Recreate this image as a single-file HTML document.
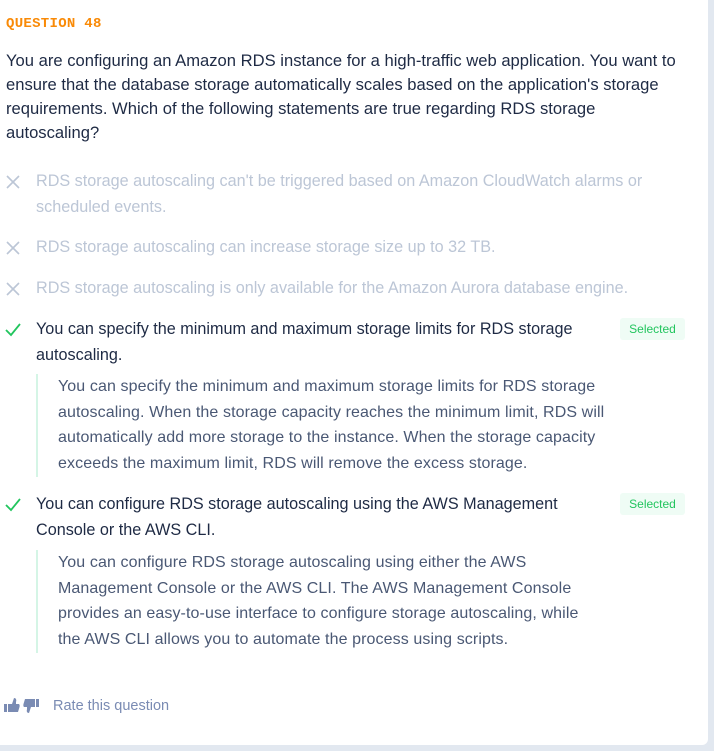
<!DOCTYPE html>
<html><head><style>
body{margin:0;background:#e2e8f0;width:714px;height:751px;overflow:hidden;font-family:"Liberation Sans",sans-serif;}
.card{position:absolute;left:0;top:0;width:708px;height:745px;background:#fff;border-radius:0 0 6px 0;}
.a{position:absolute;white-space:nowrap;}
.q{left:6px;top:16px;font-family:"Liberation Mono",monospace;font-weight:bold;font-size:14px;color:#f98a07;letter-spacing:0.3px;}
.qt{left:6px;top:49px;font-size:16.6px;line-height:24px;color:#1e2a44;}
.o{left:36px;font-size:16.2px;line-height:26px;}
.w{color:#bcc6d6;}
.c{color:#1e2a44;}
.e{left:36px;width:580px;border-left:2px solid #d5f5e6;padding-left:20px;font-size:16px;letter-spacing:0.1px;line-height:25.7px;color:#4a5874;}
.b{left:620px;width:65px;height:22px;background:#effcf5;border-radius:3px;color:#22c55e;font-size:12px;line-height:22px;text-align:center;}
</style></head><body>
<div class="card">
<div class="a q">QUESTION 48</div>
<div class="a qt">You are configuring an Amazon RDS instance for a high-traffic web application. You want to<br>ensure that the database storage automatically scales based on the application's storage<br>requirements. Which of the following statements are true regarding RDS storage<br>autoscaling?</div>

<svg class="a" style="left:5px;top:174px" width="16" height="16"><path d="M2 2L14 14M14 2L2 14" stroke="#bcc6d6" stroke-width="1.6"/></svg>
<div class="a o w" style="top:168px">RDS storage autoscaling can't be triggered based on Amazon CloudWatch alarms or<br>scheduled events.</div>
<svg class="a" style="left:5px;top:240px" width="16" height="16"><path d="M2 2L14 14M14 2L2 14" stroke="#bcc6d6" stroke-width="1.6"/></svg>
<div class="a o w" style="top:234px">RDS storage autoscaling can increase storage size up to 32 TB.</div>
<svg class="a" style="left:5px;top:281px" width="16" height="16"><path d="M2 2L14 14M14 2L2 14" stroke="#bcc6d6" stroke-width="1.6"/></svg>
<div class="a o w" style="top:275px">RDS storage autoscaling is only available for the Amazon Aurora database engine.</div>

<svg class="a" style="left:4px;top:322px" width="18" height="16"><path d="M2 8L7 13L16 2" fill="none" stroke="#22c55e" stroke-width="1.8"/></svg>
<div class="a o c" style="top:316px">You can specify the minimum and maximum storage limits for RDS storage<br>autoscaling.</div>
<div class="a b" style="top:318px">Selected</div>
<div class="a e" style="top:374px">You can specify the minimum and maximum storage limits for RDS storage<br>autoscaling. When the storage capacity reaches the minimum limit, RDS will<br>automatically add more storage to the instance. When the storage capacity<br>exceeds the maximum limit, RDS will remove the excess storage.</div>

<svg class="a" style="left:4px;top:497px" width="18" height="16"><path d="M2 8L7 13L16 2" fill="none" stroke="#22c55e" stroke-width="1.8"/></svg>
<div class="a o c" style="top:491px">You can configure RDS storage autoscaling using the AWS Management<br>Console or the AWS CLI.</div>
<div class="a b" style="top:493px">Selected</div>
<div class="a e" style="top:550px">You can configure RDS storage autoscaling using either the AWS<br>Management Console or the AWS CLI. The AWS Management Console<br>provides an easy-to-use interface to configure storage autoscaling, while<br>the AWS CLI allows you to automate the process using scripts.</div>

<svg class="a" style="left:4px;top:698px" width="42" height="17"><g fill="#7a8bb3"><rect x="0" y="6" width="3" height="8"/><path d="M4 6L8 6L10 0Q13 0 12 4L12 6L15 6Q16 7 15.5 9L14 14L4 14Z"/><rect x="32" y="1" width="3" height="8"/><path d="M31 9L27 9L25 15Q22 15 23 11L23 9L20 9Q19 8 19.5 6L21 1L31 1Z"/></g></svg>
<div class="a" style="left:53px;top:698px;font-size:14.5px;color:#7a8bb3">Rate this question</div>
</div>
</body></html>
